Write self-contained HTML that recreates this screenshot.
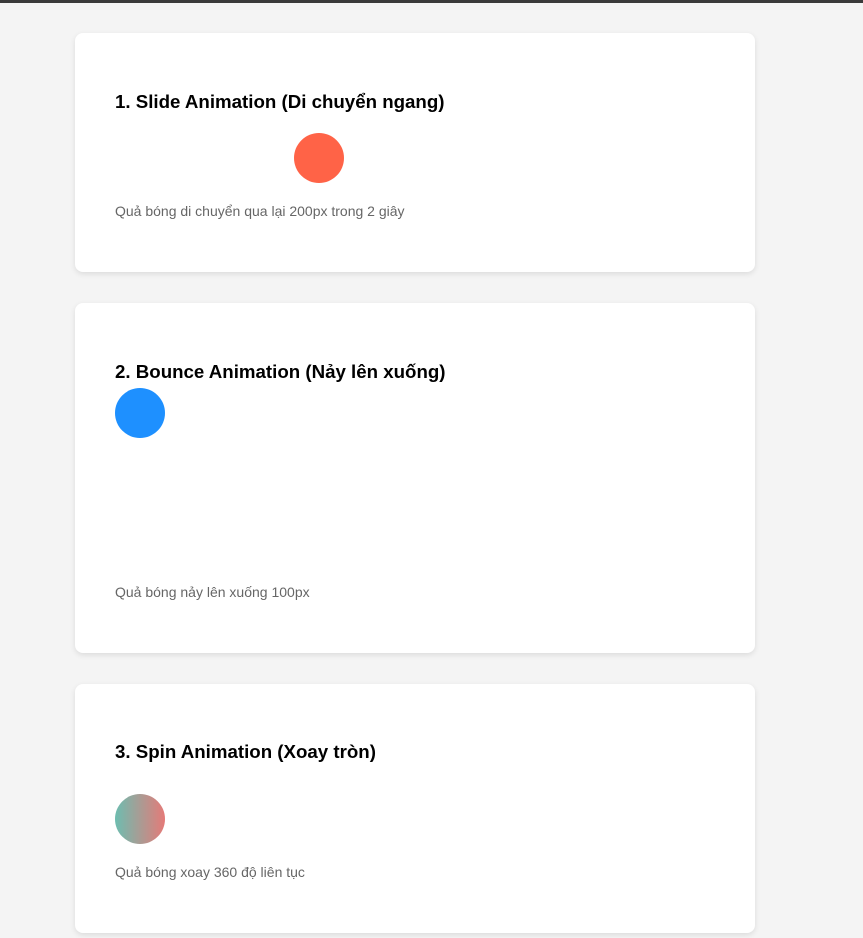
<!DOCTYPE html>
<html><head><meta charset="utf-8"><style>
*{margin:0;padding:0;box-sizing:border-box}
body{width:863px;height:938px;background:#f4f4f4;font-family:"Liberation Sans",Arial,sans-serif;position:relative;overflow:hidden}
.bar{position:absolute;left:0;top:0;width:863px;height:3px;background:#3a3a3a}
.card{position:absolute;left:75px;width:680px;background:#fff;border-radius:8px;box-shadow:0 2px 6px rgba(0,0,0,.1)}
h2{position:absolute;left:40px;font-size:18.7px;font-weight:bold;color:#000;line-height:22px;white-space:nowrap}
p{position:absolute;left:40px;font-size:14px;color:#666;line-height:16px;white-space:nowrap}
.ball{position:absolute;width:50px;height:50px;border-radius:50%}
</style></head><body>
<div class="bar"></div>
<div class="card" style="top:33px;height:239px">
<h2 style="top:58px">1. Slide Animation (Di chuyển ngang)</h2>
<div class="ball" style="left:219px;top:100px;background:#ff6347"></div>
<p style="top:170px">Quả bóng di chuyển qua lại 200px trong 2 giây</p>
</div>
<div class="card" style="top:303px;height:350px">
<h2 style="top:58px">2. Bounce Animation (Nảy lên xuống)</h2>
<div class="ball" style="left:40px;top:85px;background:#1e90ff"></div>
<p style="top:281px">Quả bóng nảy lên xuống 100px</p>
</div>
<div class="card" style="top:684px;height:249px">
<h2 style="top:57px">3. Spin Animation (Xoay tròn)</h2>
<div class="ball" style="left:40px;top:110px;background:linear-gradient(90deg,#6dbdb0,#e57a78)"></div>
<p style="top:180px">Quả bóng xoay 360 độ liên tục</p>
</div>
</body></html>
